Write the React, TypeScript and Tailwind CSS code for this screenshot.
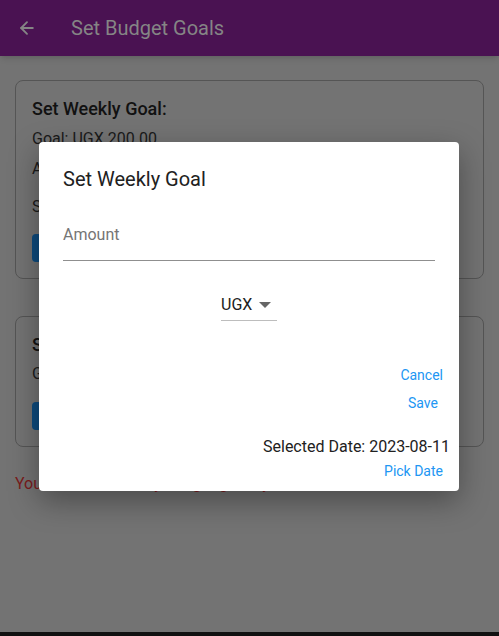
import { ArrowLeft } from 'lucide-react';

const font = { fontFamily: 'Roboto, "Noto Sans", sans-serif' };

function GoalCard({ children }: { children: React.ReactNode }) {
  return (
    <div className="rounded-lg border border-[#555555] px-4 pt-4 pb-4">{children}</div>
  );
}

export default function App() {
  return (
    <div className="relative h-[636px] w-[499px] overflow-hidden bg-[#737373]" style={font}>
      {/* app bar */}
      <div className="flex h-14 items-center bg-[#4a1252] shadow-md">
        <ArrowLeft className="ml-[17px] h-[20px] w-[20px] text-[#858585]" strokeWidth={2.2} />
        <span className="ml-[34px] text-[20px] text-[#858585]">Set Budget Goals</span>
      </div>

      {/* page behind the dialog */}
      <div className="flex flex-col px-[15px] pt-6">
        <GoalCard>
          <div className="text-[18px] font-medium leading-6 text-[#111]">Set Weekly Goal:</div>
          <div className="mt-[8px] text-[16px] leading-5 text-[#1a1a1a]">Goal: UGX 200.00</div>
          <div className="mt-[10px] text-[16px] leading-5 text-[#1a1a1a]">Amount Spent: UGX 0.00</div>
          <div className="mt-[18px] text-[16px] leading-5 text-[#1a1a1a]">Status: On track</div>
          <div className="mt-[17px] h-[28px] w-[120px] rounded-[4px] bg-[#0d4a7d]" />
        </GoalCard>
        <div className="h-[37px]" />
        <GoalCard>
          <div className="text-[18px] font-medium leading-6 text-[#111]">Set Monthly Goal:</div>
          <div className="mt-[7px] text-[16px] leading-5 text-[#1a1a1a]">Goal: Not set</div>
          <div className="mt-[18px] h-[28px] w-[120px] rounded-[4px] bg-[#0d4a7d]" />
        </GoalCard>
        <div className="mt-[25px] text-[16px] text-[#7a1b1b]">You have not set any budget goals yet.</div>
      </div>

      {/* status strip at bottom */}
      <div className="absolute bottom-0 left-0 right-0 h-[4px] bg-[#111]" />

      {/* dialog */}
      <div className="absolute left-[39px] top-[142px] flex h-[349px] w-[420px] flex-col rounded-[4px] bg-white px-6 pt-[24px] shadow-[0_10px_30px_rgba(0,0,0,0.35)]">
        <div className="text-[20px] leading-[26px] text-[#212121]">Set Weekly Goal</div>
        <div className="mt-[33px] border-b border-[#8f8f8f] pb-[15px] text-[16px] leading-5 text-[#757575]">
          Amount
        </div>
        <div className="mt-[34px] flex justify-center">
          <div className="flex w-[56px] items-center border-b border-[#bdbdbd] pb-[5px]">
            <span className="text-[16px] leading-5 text-[#212121]">UGX</span>
            <svg className="ml-[7px]" width="12" height="6" viewBox="0 0 10 5">
              <path d="M0 0 L5 5 L10 0 Z" fill="#666" />
            </svg>
          </div>
        </div>
        <div className="-mr-6 mt-[44px] flex flex-col items-end text-[14px] text-[#2196f3]">
          <span className="mr-[16px] leading-5">Cancel</span>
          <span className="mr-[21px] mt-[8px] leading-5">Save</span>
        </div>
        <div className="-mr-6 mt-[24px] flex flex-col items-end">
          <span className="mr-[9px] text-[16px] leading-5 text-[#212121]">Selected Date: 2023-08-11</span>
          <span className="mr-[16px] mt-[4px] text-[14px] leading-5 text-[#2196f3]">Pick Date</span>
        </div>
      </div>
    </div>
  );
}
